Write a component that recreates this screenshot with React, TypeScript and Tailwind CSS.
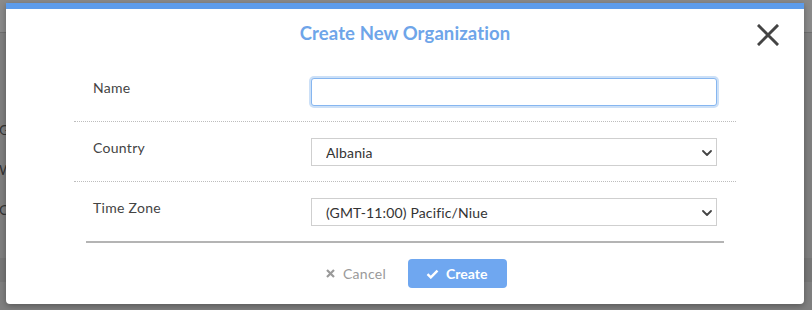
import React from 'react';

const FONT = { fontFamily: 'Lato, "Noto Sans", sans-serif' };

const Chevron = () => (
  <svg width="10" height="6" viewBox="0 0 10 6" className="pointer-events-none absolute right-[5px] top-[12px]">
    <path d="M1 1 L5 5 L9 1" fill="none" stroke="#444" strokeWidth="1.8" strokeLinecap="round" strokeLinejoin="round" />
  </svg>
);

function Row({ label, children, dotted = true }: { label: string; children: React.ReactNode; dotted?: boolean }) {
  return (
    <div className={`flex items-start px-[19px] pt-4 pb-[15px] ${dotted ? 'border-b border-dotted border-[#bdbdbd]' : ''}`}>
      <div className="w-[218px] shrink-0 text-[14px] leading-5 text-[#444] tracking-[0.3px]">{label}</div>
      <div className="relative flex-1">{children}</div>
    </div>
  );
}

function SelectBox({ value }: { value: string }) {
  return (
    <>
      <select
        defaultValue={value}
        className="h-[28px] w-full appearance-none border border-[#cfcfcf] bg-white pl-[14px] pr-6 text-[14px] tracking-[0.15px] text-[#333] outline-none"
        style={FONT}
      >
        <option>{value}</option>
      </select>
      <Chevron />
    </>
  );
}

export default function App() {
  return (
    <div className="relative h-[310px] w-[812px] overflow-hidden bg-[#7f7f7f]" style={FONT}>
      {/* page behind the overlay */}
      <div className="h-[33px] bg-[#8a8a8a] border-b border-[#6f6f6f] flex justify-center items-end">
        <span className="ml-[80px] mb-[29px] text-[18px] leading-[20px] font-bold text-[#2a2a2a]">Dashboard</span>
      </div>
      <div className="flex flex-col pt-[86px] -ml-[1px] text-[14px] text-[#333] gap-[19px]">
        <span>General</span>
        <span>Workflows</span>
        <span>Connections</span>
      </div>
      <div className="mt-[38px] h-[24px] bg-[#777]" />

      {/* modal */}
      <div className="absolute left-[6px] top-[3px] w-[798px] h-[301px] rounded-b-[4px] bg-white border-t-[6px] border-[#5d9ceb] shadow-[0_2px_6px_rgba(0,0,0,0.3)]">
        <div className="relative flex justify-center pt-[12px] pb-[17px]">
          <h2 className="text-[18.5px] leading-6 font-bold text-[#6ea5e9] tracking-[0.1px]">Create New Organization</h2>
          <button className="absolute right-[25px] top-[15px]">
            <svg width="22" height="22" viewBox="0 0 22 22">
              <path d="M2 2 L20 20 M20 2 L2 20" stroke="#444" strokeWidth="3" strokeLinecap="square" />
            </svg>
          </button>
        </div>

        <div className="mx-[68px]">
          <Row label="Name">
            <input
              className="block h-[28px] w-full rounded-[3px] border border-[#86b6f0] bg-white px-3 text-[14px] outline-none shadow-[0_0_0_2px_rgba(110,165,233,0.35)]"
            />
          </Row>
          <Row label="Country">
            <SelectBox value="Albania" />
          </Row>
          <Row label="Time Zone" dotted={false}>
            <SelectBox value="(GMT-11:00) Pacific/Niue" />
          </Row>
          <div className="mx-3 border-t-2 border-[#b4b4b4]" />
        </div>

        <div className="flex justify-center items-center gap-[22px] pl-[23px] mt-4">
          <button className="flex items-center gap-[8px] text-[14px] text-[#9a9a9a] tracking-[0.3px]">
            <svg width="9" height="9" viewBox="0 0 9 9">
              <path d="M1 1 L8 8 M8 1 L1 8" stroke="#9a9a9a" strokeWidth="2.2" />
            </svg>
            Cancel
          </button>
          <button className="flex h-[29px] w-[99px] items-center rounded-[4px] bg-[#6fa7f0] pl-[18px] text-[14px] font-bold text-white">
            <svg width="13" height="10" viewBox="0 0 13 10" className="mr-[7px]">
              <path d="M1.5 5.2 L4.8 8.4 L11.5 1.6" fill="none" stroke="#fff" strokeWidth="2.4" />
            </svg>
            Create
          </button>
        </div>
      </div>
    </div>
  );
}
